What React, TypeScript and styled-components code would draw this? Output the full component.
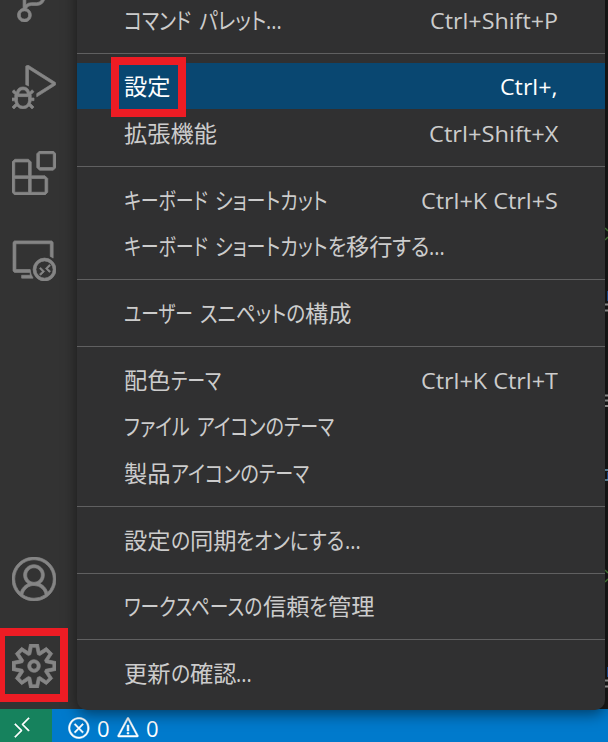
import React, { useLayoutEffect, useRef, useState } from "react";
import styled, { createGlobalStyle } from "styled-components";
import {
  VscAccount,
  VscDebugAlt,
  VscError,
  VscExtensions,
  VscRemote,
  VscRemoteExplorer,
  VscSettingsGear,
  VscSourceControl,
  VscWarning,
} from "react-icons/vsc";

const GlobalStyle = createGlobalStyle`
  * { box-sizing: border-box; }
  body { margin: 0; background: #1e1e1e; }
`;

const Window = styled.div`
  position: relative;
  display: flex;
  flex-direction: column;
  width: 608px;
  height: 742px;
  overflow: hidden;
  background: #1e1e1e;
  font-family: "Open Sans", "Noto Sans CJK JP", sans-serif;
`;

const Workbench = styled.div`
  display: flex;
  height: 709px;
  overflow: hidden;
`;

const ActivityBar = styled.nav`
  display: flex;
  flex-direction: column;
  justify-content: space-between;
  width: 86px;
  height: 752px;
  margin-top: -43px;
  background: #333333;
`;

const ActivityGroup = styled.div`
  display: flex;
  flex-direction: column;
`;

const ActivityItem = styled.div`
  display: flex;
  align-items: center;
  height: 86.4px;
  padding-left: 12px;
  color: #858585;
  svg { width: 44px; height: 44px; }
  path {
    stroke: currentColor;
    stroke-width: 0.7px;
    vector-effect: non-scaling-stroke;
  }
`;

const Editor = styled.main`
  display: flex;
  flex: 1;
  justify-content: flex-end;
  background: #1a1a1a;
`;

const CodeEdge = styled.svg`
  width: 3px;
  height: 709px;
`;

const StatusBar = styled.footer`
  display: flex;
  height: 33px;
  background: #007acc;
  color: #ffffff;
`;

const RemoteButton = styled.div`
  width: 52px;
  padding: 7px 0 0 10px;
  background: #16825d;
  svg { display: block; width: 24px; height: 24px; }
  path {
    stroke: currentColor;
    stroke-width: 0.5px;
    vector-effect: non-scaling-stroke;
  }
`;

const Problems = styled.div`
  display: flex;
  align-items: center;
  height: 38px;
  padding-left: 15px;
  font-size: 22px;
  line-height: 30px;
  svg { width: 24px; height: 24px; }
  path {
    stroke: currentColor;
    stroke-width: 0.5px;
    vector-effect: non-scaling-stroke;
  }
`;

const Count = styled.span`
  width: 25px;
  padding-left: 6px;
`;

const Menu = styled.div`
  position: absolute;
  left: 77px;
  top: -20px;
  width: 528px;
  height: 730px;
  padding-top: 16.05px;
  border-radius: 0 0 10px 10px;
  background: #303031;
  box-shadow: 0 4px 15px rgba(0, 0, 0, 0.5);
`;

const MenuRow = styled.div<{ $active?: boolean }>`
  display: flex;
  align-items: center;
  justify-content: space-between;
  height: 46.67px;
  padding: 0.6px 47px 0 47px;
  background: ${(p) => (p.$active ? "#094771" : "transparent")};
  color: ${(p) => (p.$active ? "#ffffff" : "#cccccc")};
  font-size: 23px;
  line-height: 34px;
  white-space: pre;
`;

const Divider = styled.div`
  height: 1px;
  margin: 10px 0 9px;
  background: #606061;
`;

const Label = styled.div`
  display: flex;
  font-feature-settings: "palt";
`;

const Shortcut = styled.div`
  display: flex;
  font-size: 22px;
`;

const RunBox = styled.span<{ $width: number }>`
  display: block;
  flex: none;
  width: ${(p) => p.$width}px;
`;

const RunText = styled.span`
  display: inline-block;
  transform-origin: 0 50%;
`;

const Highlight = styled.div<{ $x: number; $y: number; $w: number; $h: number }>`
  position: absolute;
  left: ${(p) => p.$x}px;
  top: ${(p) => p.$y}px;
  width: ${(p) => p.$w}px;
  height: ${(p) => p.$h}px;
  border: 8px solid #ed1c24;
`;

type RunData = [text: string, width: number];

/* Condenses a run of text so that it fills the given width. */
function Run({ text, width }: { text: string; width: number }) {
  const ref = useRef<HTMLSpanElement>(null);
  const [scale, setScale] = useState(1);
  useLayoutEffect(() => {
    if (ref.current) setScale(width / ref.current.offsetWidth);
  }, [text, width]);
  return (
    <RunBox $width={width}>
      <RunText ref={ref} style={{ transform: `scaleX(${scale})` }}>
        {text}
      </RunText>
    </RunBox>
  );
}

interface Item {
  label: RunData[];
  keys?: RunData;
  active?: boolean;
}

const groups: Item[][] = [
  [{ label: [["コマンド", 67], [" ", 7.5], ["パレット", 67.5], ["...", 15.5]], keys: ["Ctrl+Shift+P", 128] }],
  [
    { label: [["設定", 46.5]], keys: ["Ctrl+,", 58], active: true },
    { label: [["拡張機能", 93]], keys: ["Ctrl+Shift+X", 129] },
  ],
  [
    { label: [["キーボード", 83.5], [" ", 7.5], ["ショートカット", 112.5]], keys: ["Ctrl+K Ctrl+S", 137] },
    {
      label: [["キーボード", 83.5], [" ", 7.5], ["ショートカット", 112.5], ["を", 18], ["移行", 46.5], ["する", 37], ["...", 15.5]],
    },
  ],
  [{ label: [["ユーザー", 68.5], [" ", 7], ["スニペットの", 105], ["構成", 46.5]] }],
  [
    { label: [["配色", 46.5], ["テーマ", 50]], keys: ["Ctrl+K Ctrl+T", 137] },
    { label: [["ファイル", 66], [" ", 7], ["アイコンの", 87], ["テーマ", 50]] },
    { label: [["製品", 46.5], ["アイコンの", 88], ["テーマ", 50]] },
  ],
  [{ label: [["設定", 46.5], ["の", 19], ["同期", 46.5], ["をオンにする", 108.5], ["...", 15.5]] }],
  [{ label: [["ワークスペースの", 138.5], ["信頼", 46.5], ["を", 18.5], ["管理", 46.5]] }],
  [{ label: [["更新", 46.5], ["の", 19], ["確認", 46.5], ["...", 15.5]] }],
];

export default function App() {
  return (
    <Window>
      <GlobalStyle />
      <Workbench>
        <ActivityBar>
          <ActivityGroup>
            <ActivityItem><VscSourceControl /></ActivityItem>
            <ActivityItem><VscDebugAlt /></ActivityItem>
            <ActivityItem><VscExtensions /></ActivityItem>
            <ActivityItem><VscRemoteExplorer /></ActivityItem>
          </ActivityGroup>
          <ActivityGroup>
            <ActivityItem><VscAccount /></ActivityItem>
            <ActivityItem><VscSettingsGear /></ActivityItem>
          </ActivityGroup>
        </ActivityBar>
        <Editor>
          <CodeEdge viewBox="0 0 3 709" fill="none">
            <path d="M0 228L3 231M0 240L3 237M0 570L3 573M0 582L3 579" stroke="#4f8a3d" strokeWidth="1.5" />
            <path d="M0 304.5H3M0 310.5H3M0 395.5H3M0 400.5H3M0 406H3M0 680.5H3M0 686.5H3" stroke="#aaaaaa" strokeWidth="2" />
            <path d="M2.5 291V301M2.5 667V677M2.5 472V480" stroke="#1c4f9c" />
            <path d="M0 470H3M0 480H3" stroke="#8cc8ea" strokeWidth="1.5" />
          </CodeEdge>
        </Editor>
      </Workbench>
      <StatusBar>
        <RemoteButton><VscRemote /></RemoteButton>
        <Problems>
          <VscError />
          <Count>0</Count>
          <VscWarning />
          <Count>0</Count>
        </Problems>
      </StatusBar>
      <Menu>
        {groups.map((group, g) => (
          <React.Fragment key={g}>
            {g > 0 && <Divider />}
            {group.map((item, i) => (
              <MenuRow key={i} $active={item.active}>
                <Label>
                  {item.label.map(([text, width], r) => <Run key={r} text={text} width={width} />)}
                </Label>
                {item.keys && (
                  <Shortcut><Run text={item.keys[0]} width={item.keys[1]} /></Shortcut>
                )}
              </MenuRow>
            ))}
          </React.Fragment>
        ))}
      </Menu>
      <Highlight $x={111} $y={57} $w={75} $h={60} />
      <Highlight $x={-3} $y={628} $w={71} $h={74} />
    </Window>
  );
}
